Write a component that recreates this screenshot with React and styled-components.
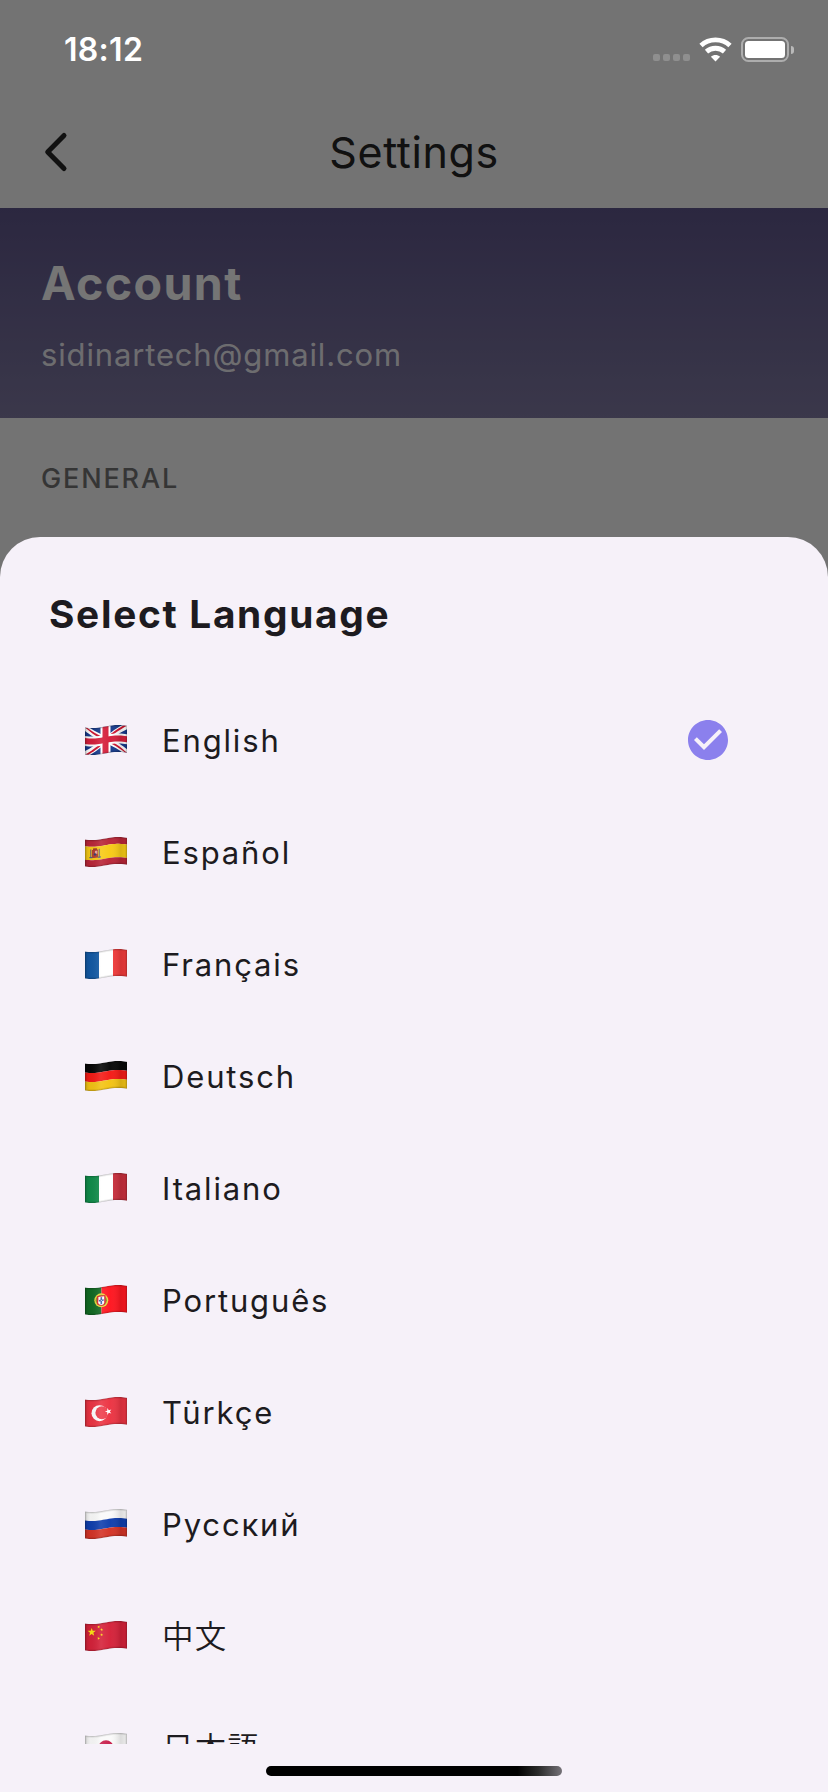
import React from 'react';
import styled, { createGlobalStyle } from 'styled-components';
import { MdCheckCircle } from 'react-icons/md';

const GlobalStyle = createGlobalStyle`
  * { box-sizing: border-box; }
  body { margin: 0; background: #737373; }
`;

const Phone = styled.div`
  position: relative;
  width: 828px;
  height: 1792px;
  overflow: hidden;
  font-family: Inter, 'Noto Sans CJK JP', sans-serif;
  background: #fafafa;
`;

/* ---------- status bar ---------- */

const StatusBar = styled.div`
  position: absolute;
  inset: 0 0 auto 0;
  height: 99px;
  padding: 0 34px 0 64px;
  display: flex;
  align-items: center;
  justify-content: space-between;
  color: #fff;
`;

const Clock = styled.span`
  font-size: 32px;
  font-weight: 600;
  line-height: 40px;
  letter-spacing: 0.3px;
`;

const StatusIcons = styled.div`
  display: flex;
  align-items: center;
`;

const Signal = styled.div`
  display: flex;
  gap: 3px;
  margin: 16px 9px 0 0;
`;

const SignalDot = styled.i`
  width: 7px;
  height: 7px;
  border-radius: 2px;
  background: rgba(255, 255, 255, 0.2);
`;

const Battery = styled.div`
  width: 48px;
  height: 25px;
  margin-left: 9px;
  padding: 2px;
  border: 2px solid rgba(255, 255, 255, 0.42);
  border-radius: 7.5px;
`;

const BatteryLevel = styled.div`
  height: 100%;
  border-radius: 3.5px;
  background: #fff;
`;

const BatteryTip = styled.div`
  width: 3px;
  height: 8px;
  margin-left: 2px;
  border-radius: 0 4px 4px 0;
  background: rgba(255, 255, 255, 0.5);
`;

/* ---------- settings screen ---------- */

const AppBar = styled.header`
  height: 208px;
  padding: 96px 42px 0;
  display: grid;
  grid-template-columns: 60px 1fr 60px;
  align-items: center;
  color: #252525;
`;

const ScreenTitle = styled.h1`
  margin: 0;
  font-size: 43px;
  font-weight: 400;
  line-height: 52px;
  letter-spacing: 0.6px;
  text-align: center;
`;

const AccountBanner = styled.section`
  height: 210px;
  padding: 51px 41px 0;
  background: linear-gradient(#5f568c, #807aa3);
`;

const AccountTitle = styled.h2`
  margin: 0 0 28px;
  font-size: 46.5px;
  font-weight: 700;
  line-height: 48px;
  letter-spacing: 1.4px;
  color: #fff;
`;

const AccountMail = styled.p`
  margin: 0;
  font-size: 31px;
  line-height: 40px;
  letter-spacing: 0.85px;
  color: rgba(255, 255, 255, 0.9);
`;

const SectionLabel = styled.h3`
  margin: 0;
  padding: 41px 41px 0;
  font-size: 27px;
  font-weight: 500;
  line-height: 40px;
  letter-spacing: 1.85px;
  color: #757575;
`;

const Scrim = styled.div`
  position: absolute;
  inset: 0;
  background: rgba(0, 0, 0, 0.54);
`;

/* ---------- language sheet ---------- */

const Sheet = styled.section`
  position: absolute;
  inset: 537px 0 0 0;
  padding-top: 53px;
  display: flex;
  flex-direction: column;
  border-radius: 40px 40px 0 0;
  background: #f6f1f9;
  color: #1d1b20;
`;

const SheetTitle = styled.h2`
  margin: 0 0 46px;
  padding-left: 49px;
  font-size: 38.8px;
  font-weight: 700;
  line-height: 48px;
  letter-spacing: 1.7px;
`;

const LanguageList = styled.ul`
  height: 1060px;
  margin: 0;
  padding: 0 96px 0 84px;
  overflow: hidden;
  list-style: none;
`;

const LanguageRow = styled.li`
  height: 112px;
  display: flex;
  align-items: center;
`;

const LanguageName = styled.span`
  flex: 1;
  margin: 2px 0 0 34px;
  font-size: ${(p) => (p.$cjk ? 31.5 : 31)}px;
  font-weight: ${(p) => (p.$cjk ? 350 : 400)};
  line-height: 44px;
  letter-spacing: ${(p) => (p.$cjk ? 1.2 : 1.85)}px;
`;

const Selected = styled(MdCheckCircle)`
  width: 48px;
  height: 48px;
  color: #8b80ed;
`;

const FlagIcon = styled.svg`
  width: 44px;
  height: 32px;
  flex: none;
`;

const HomeIndicator = styled.div`
  width: 296px;
  height: 10px;
  margin: 22px auto 0;
  border-radius: 5px;
  background: linear-gradient(90deg, #000 85%, #2a2a2a 92%, #757278 100%);
`;

/* ---------- flags: shapes on a 42x27 cloth, bent along a wave ---------- */

const W = 42;
const H = 27;
const lift = (x) => 1.5 + 1.5 * Math.cos((Math.PI * (x - 7)) / 26);

const bend = (points) => {
  const out = [];
  points.forEach(([x0, y0], i) => {
    const [x1, y1] = points[(i + 1) % points.length];
    const steps = Math.max(1, Math.ceil(Math.abs(x1 - x0) / 2));
    for (let s = 0; s < steps; s += 1) {
      const x = x0 + ((x1 - x0) * s) / steps;
      const y = y0 + ((y1 - y0) * s) / steps;
      out.push(`${x.toFixed(2)},${(y + lift(x)).toFixed(2)}`);
    }
  });
  return out.join(' ');
};

const Patch = ({ pts, fill }) => <polygon points={bend(pts)} fill={fill} />;

const Box = ({ x = 0, y = 0, w = W, h = H, fill }) => (
  <Patch pts={[[x, y], [x + w, y], [x + w, y + h], [x, y + h]]} fill={fill} />
);

const Disc = ({ x, y, r, fill }) => <circle cx={x} cy={y + lift(x)} r={r} fill={fill} />;

const Star = ({ x, y, r, turn = 0, fill }) => {
  const pts = Array.from({ length: 10 }, (_, i) => {
    const a = ((i * 36 + turn - 90) * Math.PI) / 180;
    const d = i % 2 ? r * 0.4 : r;
    return `${(x + d * Math.cos(a)).toFixed(2)},${(y + lift(x) + d * Math.sin(a)).toFixed(2)}`;
  });
  return <polygon points={pts.join(' ')} fill={fill} />;
};

const Rows = ({ colors, sizes = [9, 9, 9] }) =>
  colors.map((c, i) => (
    <Box key={i} y={sizes.slice(0, i).reduce((a, b) => a + b, 0)} h={sizes[i]} fill={c} />
  ));

const Columns = ({ colors }) => colors.map((c, i) => <Box key={i} x={i * 14} w={14} fill={c} />);

const ART = {
  gb: (
    <>
      <Box fill="#163a8c" />
      <Patch pts={[[0, 0], [5, 0], [42, 23.5], [42, 27], [37, 27], [0, 3.5]]} fill="#fff" />
      <Patch pts={[[42, 0], [37, 0], [0, 23.5], [0, 27], [5, 27], [42, 3.5]]} fill="#fff" />
      <Patch pts={[[0, 0], [2, 0], [17, 9.5], [13, 9.5]]} fill="#d0142f" />
      <Patch pts={[[42, 0], [39, 0], [24, 9.5], [28, 9.5]]} fill="#d0142f" />
      <Patch pts={[[0, 27], [3, 27], [18, 17.5], [14, 17.5]]} fill="#d0142f" />
      <Patch pts={[[42, 27], [40, 27], [25, 17.5], [29, 17.5]]} fill="#d0142f" />
      <Box x={15.5} w={10} fill="#fff" />
      <Box y={8.5} h={10} fill="#fff" />
      <Box x={17.5} w={6} fill="#d51f3b" />
      <Box y={10.5} h={6} fill="#d51f3b" />
    </>
  ),
  es: (
    <>
      <Rows colors={['#b92638', '#f7cb16', '#b92638']} sizes={[6.8, 13.4, 6.8]} />
      <Box x={5} y={9.5} w={1.4} h={8.5} fill="#8c7468" />
      <Box x={13.6} y={9.5} w={1.4} h={8.5} fill="#8c7468" />
      <Box x={7} y={10} w={6} h={8} fill="#b5402f" />
      <Box x={8} y={8.4} w={4} h={2} fill="#a33b24" />
      <Box x={10} y={11} w={2.4} h={3} fill="#e4a4a0" />
      <Disc x={10} y={14.5} r={1.2} fill="#343d75" />
      <Box x={4.4} y={17} w={3} h={1.2} fill="#4f6383" />
      <Box x={12.8} y={17} w={3} h={1.2} fill="#4f6383" />
    </>
  ),
  fr: <Columns colors={['#135aa5', '#fff', '#f23b3b']} />,
  de: <Rows colors={['#080808', '#f51b16', '#f3c314']} />,
  it: <Columns colors={['#118d4b', '#fff', '#c92f3d']} />,
  pt: (
    <>
      <Box w={16.5} fill="#126b24" />
      <Box x={16.5} w={25.5} fill="#ff1620" />
      <Disc x={16.3} y={13.2} r={7} fill="#e9d43b" />
      <Disc x={16.3} y={13.2} r={5.6} fill="#8b8d26" />
      <Box x={12.1} y={8.5} w={8.4} h={8} fill="#e21f2d" />
      <Disc x={16.3} y={14.6} r={4.1} fill="#e21f2d" />
      <Box x={13.4} y={9.5} w={5.8} h={6.5} fill="#fff" />
      <Disc x={16.3} y={15} r={2.8} fill="#fff" />
      <Box x={15.5} y={10} w={1.6} h={7} fill="#3e5fa8" />
      <Box x={13.9} y={12.5} w={4.8} h={1.6} fill="#3e5fa8" />
      <Disc x={16.3} y={13.3} r={0.5} fill="#fff" />
    </>
  ),
  tr: (
    <>
      <Box fill="#ec3443" />
      <Disc x={14.5} y={13.7} r={8} fill="#fff" />
      <Disc x={16.9} y={13.7} r={6.5} fill="#ee3f4d" />
      <Star x={23.4} y={13.6} r={3.6} turn={-90} fill="#fff" />
    </>
  ),
  ru: <Rows colors={['#fafafa', '#103fae', '#d43427']} />,
  cn: (
    <>
      <Box fill="#d5223a" />
      <Star x={6.7} y={8.2} r={4.3} fill="#fde314" />
      <Star x={13.7} y={3.4} r={1.5} turn={20} fill="#fde314" />
      <Star x={16.6} y={6.5} r={1.5} turn={-10} fill="#fde314" />
      <Star x={16.6} y={11.7} r={1.5} fill="#fde314" />
      <Star x={13.6} y={14.9} r={1.5} turn={20} fill="#fde314" />
    </>
  ),
  jp: (
    <>
      <Box fill="#fafafa" />
      <Disc x={21} y={13.5} r={7.6} fill="#c8204c" />
    </>
  ),
};

const Flag = ({ code }) => {
  const outline = bend([[0, 0], [W, 0], [W, H], [0, H]]);
  return (
    <FlagIcon viewBox="-1 -1 44 32" aria-hidden="true">
      <defs>
        <linearGradient id={`fold-${code}`}>
          <stop offset="0" stopColor="#000" stopOpacity="0.15" />
          <stop offset="0.12" stopColor="#000" stopOpacity="0.04" />
          <stop offset="0.38" stopColor="#fff" stopOpacity="0.1" />
          <stop offset="0.6" stopColor="#fff" stopOpacity="0.02" />
          <stop offset="0.85" stopColor="#000" stopOpacity="0.12" />
          <stop offset="1" stopColor="#000" stopOpacity="0.06" />
        </linearGradient>
        <clipPath id={`cloth-${code}`}>
          <polygon points={outline} />
        </clipPath>
      </defs>
      <g clipPath={`url(#cloth-${code})`}>
        {ART[code]}
        <polygon points={outline} fill={`url(#fold-${code})`} />
        <polygon points={outline} fill="none" stroke="#000" strokeOpacity="0.07" strokeWidth="3.4" />
        <polygon points={outline} fill="none" stroke="#000" strokeOpacity="0.16" strokeWidth="1.4" />
      </g>
    </FlagIcon>
  );
};

const LANGUAGES = [
  { code: 'gb', name: 'English', selected: true },
  { code: 'es', name: 'Español' },
  { code: 'fr', name: 'Français' },
  { code: 'de', name: 'Deutsch' },
  { code: 'it', name: 'Italiano' },
  { code: 'pt', name: 'Português' },
  { code: 'tr', name: 'Türkçe' },
  { code: 'ru', name: 'Русский' },
  { code: 'cn', name: '中文', cjk: true },
  { code: 'jp', name: '日本語', cjk: true },
];

const BackIcon = () => (
  <svg width="26" height="42" viewBox="0 0 26 42" fill="none" stroke="currentColor" strokeWidth="5" strokeLinecap="round" strokeLinejoin="round">
    <path d="M22 4.5 5.7 21 22 37.5" />
  </svg>
);

const WifiIcon = () => (
  <svg width="33" height="25" viewBox="0 0 33 25" fill="none" stroke="#fff" strokeWidth="4.8">
    <path d="M2 8.4C10 1.1 23 1.1 31 8.4" />
    <path d="M7.5 14.6c5-4.5 13-4.5 18 0" />
    <path d="M16.5 24.5l-4.6-4.7c2.6-2.3 6.6-2.3 9.2 0z" fill="#fff" stroke="none" />
  </svg>
);

export default function App() {
  return (
    <>
      <GlobalStyle />
      <Phone>
        <AppBar>
          <BackIcon />
          <ScreenTitle>Settings</ScreenTitle>
        </AppBar>
        <AccountBanner>
          <AccountTitle>Account</AccountTitle>
          <AccountMail>sidinartech@gmail.com</AccountMail>
        </AccountBanner>
        <SectionLabel>GENERAL</SectionLabel>

        <Scrim />

        <StatusBar>
          <Clock>18:12</Clock>
          <StatusIcons>
            <Signal>
              <SignalDot />
              <SignalDot />
              <SignalDot />
              <SignalDot />
            </Signal>
            <WifiIcon />
            <Battery>
              <BatteryLevel />
            </Battery>
            <BatteryTip />
          </StatusIcons>
        </StatusBar>

        <Sheet>
          <SheetTitle>Select Language</SheetTitle>
          <LanguageList>
            {LANGUAGES.map(({ code, name, selected, cjk }) => (
              <LanguageRow key={code}>
                <Flag code={code} />
                <LanguageName $cjk={cjk}>{name}</LanguageName>
                {selected && <Selected />}
              </LanguageRow>
            ))}
          </LanguageList>
          <HomeIndicator />
        </Sheet>
      </Phone>
    </>
  );
}
